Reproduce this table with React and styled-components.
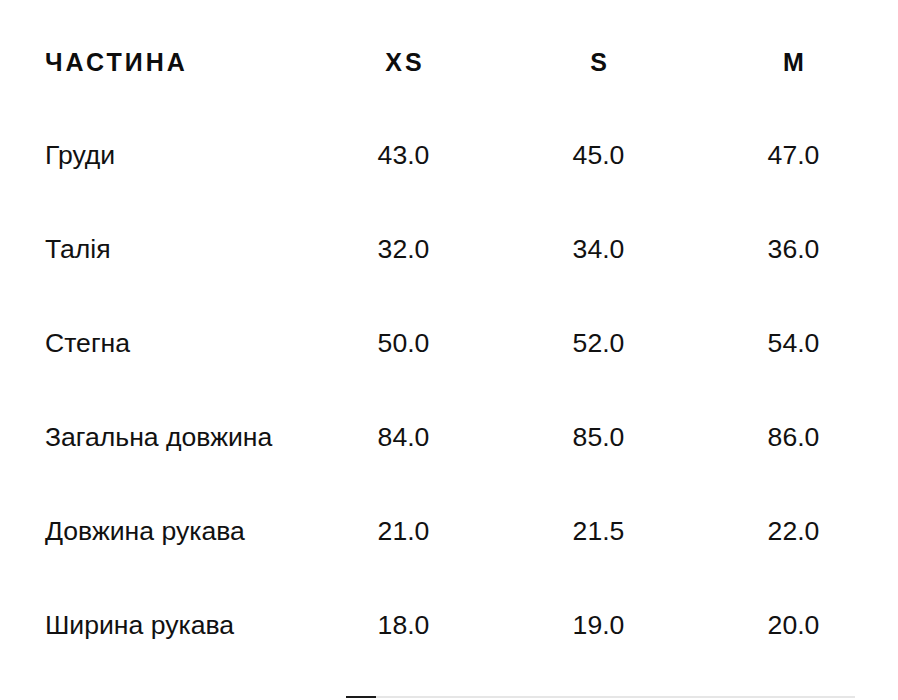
import React from 'react';
import styled, { createGlobalStyle } from 'styled-components';

const GlobalStyle = createGlobalStyle`
  html, body {
    margin: 0;
    padding: 0;
    background: #ffffff;
  }
  body {
    font-family: "Liberation Sans", Arial, sans-serif;
    color: #111111;
  }
`;

const Page = styled.div`
  width: 898px;
  height: 700px;
  overflow: hidden;
  display: flex;
  flex-direction: column;
`;

const Table = styled.div`
  display: grid;
  grid-template-columns: 261px repeat(3, 195px);
  grid-template-rows: 91px;
  grid-auto-rows: 94px;
  padding-left: 45px;
  padding-top: 17px;
`;

const HeadCell = styled.div`
  display: flex;
  align-items: center;
  justify-content: ${(p) => (p.$first ? 'flex-start' : 'center')};
  padding-left: ${(p) => (p.$first ? '0' : '3px')};
  font-size: 25px;
  font-weight: 700;
  letter-spacing: 3px;
  color: #0d0d0d;
`;

const Cell = styled.div`
  display: flex;
  align-items: center;
  justify-content: ${(p) => (p.$first ? 'flex-start' : 'center')};
  font-size: 26.6px;
  color: #111111;
`;

const ScrollTrack = styled.div`
  margin-top: auto;
  margin-bottom: 2px;
  margin-left: 346px;
  width: 509px;
  height: 2px;
  background: #e6e6e6;
  display: flex;
`;

const ScrollThumb = styled.div`
  width: 30px;
  height: 100%;
  background: #1a1a1a;
`;

const sizes = ['XS', 'S', 'M'];

const rows = [
  ['Груди', '43.0', '45.0', '47.0'],
  ['Талія', '32.0', '34.0', '36.0'],
  ['Стегна', '50.0', '52.0', '54.0'],
  ['Загальна довжина', '84.0', '85.0', '86.0'],
  ['Довжина рукава', '21.0', '21.5', '22.0'],
  ['Ширина рукава', '18.0', '19.0', '20.0'],
];

export default function App() {
  return (
    <>
      <GlobalStyle />
      <Page>
        <Table>
          <HeadCell $first>ЧАСТИНА</HeadCell>
          {sizes.map((s) => (
            <HeadCell key={s}>{s}</HeadCell>
          ))}
          {rows.map((row) =>
            row.map((v, i) => (
              <Cell key={row[0] + i} $first={i === 0}>
                {v}
              </Cell>
            ))
          )}
        </Table>
        <ScrollTrack>
          <ScrollThumb />
        </ScrollTrack>
      </Page>
    </>
  );
}
